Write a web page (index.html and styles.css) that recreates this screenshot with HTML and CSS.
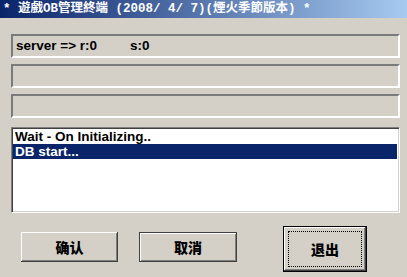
FILE: index.html
```html
<!DOCTYPE html>
<html lang="zh">
<head>
  <meta charset="UTF-8">
  <title>遊戲OB管理終端</title>
  <link rel="stylesheet" href="styles.css">
</head>
<body>
<div class="window">
  <div class="titlebar">* 遊戲OB管理終端 (2008/ 4/ 7)(煙火季節版本) *</div>
  <div class="content">
    <div class="field"><span>server =&gt; r:0</span><span class="s">s:0</span></div>
    <div class="field"></div>
    <div class="field"></div>
    <ul class="list">
      <li>Wait - On Initializing..</li>
      <li class="selected">DB start...</li>
    </ul>
    <div class="buttons">
      <button class="btn ok">确认</button>
      <button class="btn cancel">取消</button>
      <button class="btn exit"><span class="focus">退出</span></button>
    </div>
  </div>
</div>
</body>
</html>
```

FILE: styles.css
```css
* {
  margin: 0;
  padding: 0;
  box-sizing: border-box;
}

ul {
  list-style: none;
}

body {
  background-color: #d4d0c8;
  font-family: "Liberation Sans", "Noto Sans CJK SC", sans-serif;
}

.window {
  width: 407px;
  height: 277px;
  overflow: hidden;
}

.titlebar {
  height: 18px;
  line-height: 18px;
  padding-left: 3px;
  background: linear-gradient(to right, #0a246a, #a6caf0);
  color: #fff;
  font-family: "Liberation Mono", "Noto Sans CJK TC", monospace;
  font-size: 12.5px;
  font-weight: bold;
  white-space: pre;
}

.content {
  padding: 16px 7px 0 11px;
}

.field {
  height: 24px;
  margin-bottom: 6px;
  padding-left: 3px;
  border-top: 2px solid #7b7b7b;
  border-left: 2px solid #7b7b7b;
  border-right: 2px solid #fff;
  border-bottom: 2px solid #fff;
  font-size: 13.5px;
  font-weight: bold;
  line-height: 20px;
  color: #000;
}

.field .s {
  margin-left: 33px;
}

.list {
  height: 86px;
  margin-top: 9px;
  padding: 1px 2px 0 1px;
  background-color: #fff;
  border-top: 1px solid #808080;
  border-left: 1px solid #808080;
  border-right: 1px solid #fff;
  border-bottom: 1px solid #fff;
  box-shadow: inset 1px 1px #404040, inset -1px -1px #d4d0c8;
  font-size: 13.5px;
  font-weight: bold;
}

.list li {
  height: 15px;
  line-height: 15px;
  padding-left: 2px;
  color: #000;
}

.list li.selected {
  background-color: #0a246a;
  color: #fff;
}

.buttons {
  display: flex;
  align-items: flex-start;
  padding: 13px 0 0 10px;
}

.btn {
  height: 30px;
  background-color: #d4d0c8;
  border: none;
  box-shadow: inset -1px -1px #404040, inset 1px 1px #fff, inset -2px -2px #808080;
  font-family: "Noto Sans CJK SC", sans-serif;
  font-size: 14px;
  font-weight: 900;
  color: #000;
}

.ok {
  width: 97px;
  margin-top: 6px;
}

.cancel {
  width: 98px;
  margin-top: 6px;
  margin-left: 21px;
  box-shadow: inset 1px 1px #404040, inset -1px -1px #404040, inset 2px 2px #fff, inset -2px -2px #808080;
}

.exit {
  width: 84px;
  height: 46px;
  margin-left: 46px;
  padding: 4px;
  border: 1px solid #000;
  box-shadow: inset -1px -1px #404040, inset 1px 1px #fff, inset -2px -2px #808080;
}

.exit .focus {
  display: flex;
  align-items: center;
  justify-content: center;
  height: 100%;
  border: 1px dotted #000;
}
```
